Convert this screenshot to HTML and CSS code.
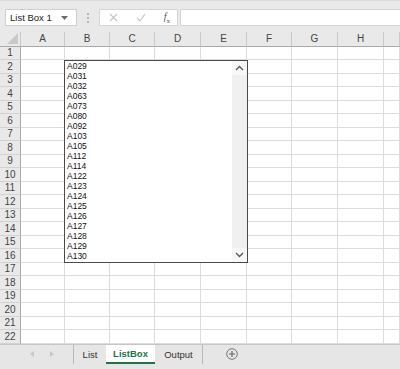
FILE: index.html
```html
<!DOCTYPE html>
<html lang="en">
<head>
  <meta charset="UTF-8" />
  <title>ListBox</title>
  <link rel="stylesheet" href="styles.css">
</head>
<body>

  <div class="formula-bar">
    <div class="name-box">
      <span>List Box 1</span>
      <svg class="caret" width="7" height="4" viewBox="0 0 7 4"><path d="M0 0h7L3.5 4z" fill="#6b6b6b"/></svg>
    </div>
    <div class="grip">
      <svg width="2" height="10" viewBox="0 0 2 10"><rect y="0" width="2" height="2" fill="#b8b8b8"/><rect y="4" width="2" height="2" fill="#b8b8b8"/><rect y="8" width="2" height="2" fill="#b8b8b8"/></svg>
    </div>
    <div class="fx-box">
      <svg width="9" height="9" viewBox="0 0 9 9"><path d="M1 1l7 7M8 1L1 8" stroke="#c4c4c4" stroke-width="1.1"/></svg>
      <svg width="10" height="9" viewBox="0 0 10 9"><path d="M1 5l3 3 5-7" stroke="#c4c4c4" stroke-width="1.1" fill="none"/></svg>
      <span class="fx"><i>f</i><sub>x</sub></span>
    </div>
    <div class="formula-input"></div>
  </div>

  <div class="workbook">
    <div class="sheet" id="sheet">
      <div class="corner"><svg width="11" height="11" viewBox="0 0 11 11"><path d="M11 0v11H0z" fill="#c9c9c9"/></svg></div>
      <div class="col-head">A</div>
      <div class="col-head">B</div>
      <div class="col-head">C</div>
      <div class="col-head">D</div>
      <div class="col-head">E</div>
      <div class="col-head">F</div>
      <div class="col-head">G</div>
      <div class="col-head">H</div>
      <div class="col-head"></div>
    </div>

    <div class="list-box">
      <ul class="items">
        <li>A029</li>
        <li>A031</li>
        <li>A032</li>
        <li>A063</li>
        <li>A073</li>
        <li>A080</li>
        <li>A092</li>
        <li>A103</li>
        <li>A105</li>
        <li>A112</li>
        <li>A114</li>
        <li>A122</li>
        <li>A123</li>
        <li>A124</li>
        <li>A125</li>
        <li>A126</li>
        <li>A127</li>
        <li>A128</li>
        <li>A129</li>
        <li>A130</li>
      </ul>
      <div class="scrollbar">
        <div class="scroll-btn">
          <svg width="9" height="6" viewBox="0 0 9 6"><path d="M1 5l3.5-3.5L8 5" stroke="#555" stroke-width="1.3" fill="none"/></svg>
        </div>
        <div class="track"></div>
        <div class="scroll-btn">
          <svg width="9" height="6" viewBox="0 0 9 6"><path d="M1 1l3.5 3.5L8 1" stroke="#555" stroke-width="1.3" fill="none"/></svg>
        </div>
      </div>
    </div>
  </div>

  <div class="tab-bar">
    <div class="tab-nav">
      <svg width="4" height="6" viewBox="0 0 4 6"><path d="M4 0v6L0 3z" fill="#c8c8c8"/></svg>
      <svg width="4" height="6" viewBox="0 0 4 6"><path d="M0 0v6l4-3z" fill="#c8c8c8"/></svg>
    </div>
    <div class="tabs">
      <div class="tab tab-list">List</div>
      <div class="tab tab-listbox active">ListBox</div>
      <div class="tab tab-output">Output</div>
    </div>
    <div class="add-sheet">
      <svg width="12" height="12" viewBox="0 0 12 12"><circle cx="6" cy="6" r="5.3" stroke="#777" fill="none"/><path d="M6 3v6M3 6h6" stroke="#666" stroke-width="1.2"/></svg>
    </div>
  </div>

  <script>
    const sheet = document.getElementById('sheet');
    for (let r = 1; r <= 22; r++) {
      const head = document.createElement('div');
      head.className = 'row-head';
      head.textContent = r;
      sheet.appendChild(head);
      for (let c = 0; c < 9; c++) {
        const cell = document.createElement('div');
        cell.className = 'cell';
        sheet.appendChild(cell);
      }
    }
  </script>
</body>
</html>
```

FILE: styles.css
```css
body {
  margin: 0;
  width: 400px;
  height: 369px;
  overflow: hidden;
  font-family: 'Liberation Sans', Arial, sans-serif;
  color: #333;
  background: #fff;
}

.formula-bar {
  height: 32px;
  box-sizing: border-box;
  padding: 8px 0 0 5px;
  display: flex;
  background: #e9e9e9;
  border-top: 1px solid #dcdcdc;
}

.name-box {
  width: 72px;
  height: 17px;
  box-sizing: border-box;
  border: 1px solid #cfcfcf;
  background: #fff;
  display: flex;
  align-items: center;
  justify-content: space-between;
  padding: 0 8px 0 4px;
  font-size: 9.5px;
  color: #222;
}

.grip {
  width: 22px;
  height: 17px;
  display: flex;
  align-items: center;
  justify-content: center;
}

.fx-box {
  width: 79px;
  height: 17px;
  box-sizing: border-box;
  border: 1px solid #d6d6d6;
  background: #fff;
  display: flex;
  align-items: center;
  justify-content: space-between;
  padding: 0 7px 0 9px;
}

.fx {
  font-family: 'Liberation Serif', serif;
  font-size: 10px;
  color: #555;
}

.fx sub {
  font-size: 7px;
}

.formula-input {
  flex: 1;
  height: 17px;
  margin-left: 2px;
  box-sizing: border-box;
  border: 1px solid #d6d6d6;
  border-right: none;
  background: #fff;
}

.workbook {
  position: relative;
  height: 311.5px;
  overflow: hidden;
}

.sheet {
  display: grid;
  grid-template-columns: 21px 44px 45px 45px 46px 46px 45px 46px 46px 1fr;
  grid-template-rows: 14.5px repeat(22, 13.5px);
}

.corner,
.col-head,
.row-head {
  background: #e9e9e9;
  color: #444;
  font-size: 10px;
  display: flex;
  align-items: center;
  justify-content: center;
  box-sizing: border-box;
}

.corner {
  align-items: flex-end;
  justify-content: flex-end;
  padding: 0 2px 2px 0;
  border-right: 1px solid #c9c9c9;
  border-bottom: 1px solid #a9a9a9;
}

.col-head {
  border-right: 1px solid #c9c9c9;
  border-bottom: 1px solid #a9a9a9;
}

.row-head {
  border-right: 1px solid #a9a9a9;
  border-bottom: 1px solid #d2d2d2;
}

.cell {
  box-sizing: border-box;
  border-right: 1px solid #dcdcdc;
  border-bottom: 1px solid #dcdcdc;
}

.list-box {
  position: absolute;
  left: 64px;
  top: 28px;
  width: 184px;
  height: 202.5px;
  box-sizing: border-box;
  border: 1px solid #4a4a4a;
  background: #fff;
  display: flex;
}

.items {
  flex: 1;
  margin: 0;
  padding: 0 0 0 2px;
  list-style: none;
  font-size: 8.5px;
  line-height: 10px;
  color: #111;
}

.scrollbar {
  width: 15px;
  display: flex;
  flex-direction: column;
  background: #f0f0f0;
}

.scroll-btn {
  height: 14px;
  display: flex;
  align-items: center;
  justify-content: center;
  background: #f7f7f7;
}

.track {
  flex: 1;
}

.tab-bar {
  height: 25.5px;
  box-sizing: border-box;
  border-top: 1px solid #c6c6c6;
  background: #e6e6e6;
  display: flex;
  align-items: flex-start;
  font-size: 9.5px;
}

.tab-nav {
  width: 63px;
  height: 19px;
  display: flex;
  align-items: center;
  justify-content: center;
  gap: 16px;
  margin-left: 10px;
}

.tabs {
  display: flex;
  height: 19px;
}

.tab {
  height: 19px;
  display: flex;
  align-items: center;
  justify-content: center;
  box-sizing: border-box;
  color: #333;
}

.tab-list {
  width: 33px;
  border-left: 1px solid #b8b8b8;
}

.tab-listbox {
  width: 49px;
}

.tab-output {
  width: 48px;
  border-right: 1px solid #b8b8b8;
}

.tab.active {
  background: #fff;
  color: #217346;
  font-weight: bold;
  border-bottom: 2px solid #217346;
}

.add-sheet {
  margin-left: 23px;
  height: 19px;
  display: flex;
  align-items: center;
}
```
